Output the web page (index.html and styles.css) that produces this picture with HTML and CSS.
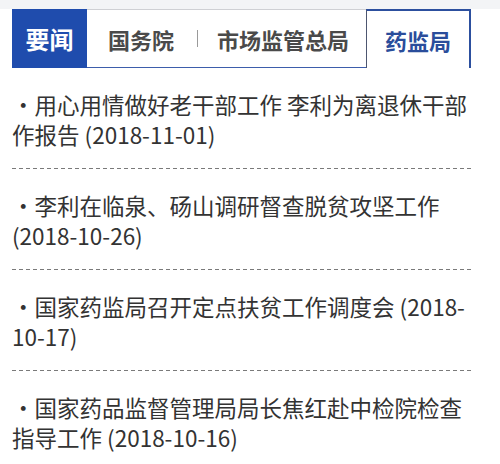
FILE: index.html
```html
<!DOCTYPE html>
<html lang="zh-CN">
<head>
<meta charset="utf-8">
<title>要闻</title>
<link rel="stylesheet" href="styles.css">
</head>
<body>
<div class="top"></div>
<div class="tabs">
  <div class="label">要闻</div>
  <div class="bar">
    <span class="tab">国务院</span>
    <span class="sep"></span>
    <span class="tab">市场监管总局</span>
  </div>
  <div class="active">药监局</div>
</div>
<ul class="news">
  <li class="item"><span class="title">・用心用情做好老干部工作 李利为离退休干部作报告</span> <span class="date">(2018-11-01)</span></li>
  <li class="item"><span class="title">・李利在临泉、砀山调研督查脱贫攻坚工作</span> <span class="date">(2018-10-26)</span></li>
  <li class="item"><span class="title">・国家药监局召开定点扶贫工作调度会</span> <span class="date">(2018-10-17)</span></li>
  <li class="item last"><span class="title">・国家药品监督管理局局长焦红赴中检院检查指导工作</span> <span class="date">(2018-10-16)</span></li>
</ul>
</body>
</html>
```
FILE: styles.css
```css
html, body {
  margin: 0;
  padding: 0;
  background: #ffffff;
}
body {
  font-family: "Noto Sans CJK SC", sans-serif;
  color: #333333;
}
.top {
  height: 9px;
  background: #f3f4f6;
}
.tabs {
  display: flex;
  height: 59px;
  margin: 0 29px 0 12px;
}
.label {
  width: 75px;
  background: #1f4cad;
  color: #ffffff;
  font-size: 24px;
  font-weight: 700;
  display: flex;
  align-items: center;
  justify-content: center;
}
.bar {
  flex: 1;
  display: flex;
  align-items: center;
  padding-left: 21px;
  border-top: 1px solid #cfd0d4;
  border-bottom: 1px solid #3d5dab;
}
.tab {
  font-size: 22px;
  font-weight: 700;
  color: #4a4a4a;
  line-height: 1;
}
.sep {
  width: 1px;
  height: 17px;
  background: #9a9a9a;
  margin: 0 19px 0 23px;
}
.active {
  width: 102px;
  border-top: 2px solid #2c4f9e;
  border-left: 1px solid #4d5670;
  border-right: 2px solid #2c4f9e;
  color: #2a4d9b;
  font-size: 22px;
  font-weight: 700;
  display: flex;
  align-items: center;
  justify-content: center;
}
.news {
  list-style: none;
  margin: 0 28px 0 12px;
  padding: 0;
}
.item {
  font-size: 22.5px;
  line-height: 30px;
  color: #333333;
  padding: 21px 0 20px;
  background-image: linear-gradient(to right, #7a7a7a 0 4px, transparent 4px 7px);
  background-size: 7px 1px;
  background-repeat: repeat-x;
  background-position: left bottom;
}
.item.last {
  background-image: none;
}
.title, .date {
  color: #333333;
}
```
